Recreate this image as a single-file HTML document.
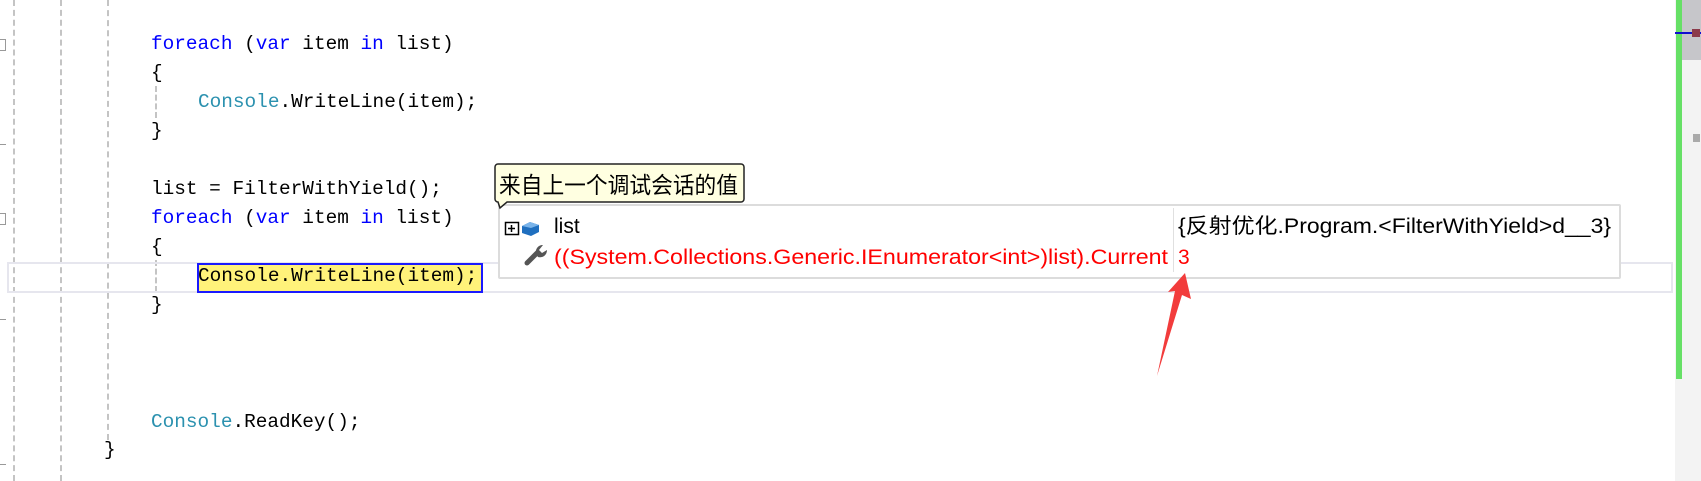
<!DOCTYPE html>
<html><head><meta charset="utf-8"><style>
html,body{margin:0;padding:0;background:#fff;width:1701px;height:481px;overflow:hidden;position:relative}
.c{position:absolute;font-family:"Liberation Mono","Noto Sans CJK SC",monospace;font-size:19.4px;line-height:29px;white-space:pre;color:#000}
.k{color:#0000ff}.t{color:#2b91af}
.g{position:absolute;width:0;border-left:2px dashed #c4c4c4}
.a{position:absolute}
</style></head><body>
<div class="g" style="left:13px;top:0;height:481px"></div>
<div class="g" style="left:60px;top:0;height:481px"></div>
<div class="g" style="left:107px;top:0;height:440px"></div>
<div class="g" style="left:155px;top:86px;height:32px"></div>
<div class="g" style="left:155px;top:260px;height:32px"></div>
<div class="a" style="left:0;top:39px;width:5px;height:10px;border:1px solid #999;border-left:none"></div>
<div class="a" style="left:0;top:213px;width:5px;height:10px;border:1px solid #999;border-left:none"></div>
<div class="a" style="left:0;top:144px;width:6px;height:1px;background:#999"></div>
<div class="a" style="left:0;top:319px;width:6px;height:1px;background:#999"></div>
<div class="a" style="left:0;top:464px;width:6px;height:1px;background:#999"></div>
<div class="a" style="left:7px;top:262px;width:1662px;height:27px;border:2px solid #e6e6ee"></div>
<div class="a" style="left:197px;top:263px;width:282px;height:26px;background:#fff27a;border:2px solid #1a1aff"></div>
<div class="c" style="left:151px;top:30px"><span class="k">foreach</span> (<span class="k">var</span> item <span class="k">in</span> list)</div>
<div class="c" style="left:151px;top:59px">{</div>
<div class="c" style="left:198px;top:88px"><span class="t">Console</span>.WriteLine(item);</div>
<div class="c" style="left:151px;top:117px">}</div>
<div class="c" style="left:151px;top:175px">list = FilterWithYield();</div>
<div class="c" style="left:151px;top:204px"><span class="k">foreach</span> (<span class="k">var</span> item <span class="k">in</span> list)</div>
<div class="c" style="left:151px;top:233px">{</div>
<div class="c" style="left:198px;top:262px">Console.WriteLine(item);</div>
<div class="c" style="left:151px;top:291px">}</div>
<div class="c" style="left:151px;top:408px"><span class="t">Console</span>.ReadKey();</div>
<div class="c" style="left:104px;top:436px">}</div>
<div class="a" style="left:498px;top:204px;width:1119px;height:71px;background:#fff;border:2px solid #dcdcdc;border-radius:2px"></div>
<div class="a" style="left:1173px;top:208px;width:1px;height:64px;background:#e0e0e0"></div>
<svg class="a" style="left:0;top:0" width="1701" height="481">
<rect x="505.5" y="222.5" width="13" height="12" fill="#fff" stroke="#000" stroke-width="1.5"/>
<path d="M508 228.5h7M511.5 225v7" stroke="#000" stroke-width="1.5"/>
<path d="M522 226 l8 -4 l9 3 v7 l-8 4 l-9 -3z" fill="#1f6fbf"/>
<path d="M522 226 l8 -4 l9 3 l-8 3z" fill="#7ab4ea"/>
<path d="M527 263 l10 -10" stroke="#555" stroke-width="5" stroke-linecap="round"/>
<path d="M536 254 a7 7 0 0 1 7 -9 l-4 5 l3 3 l5 -3 a7 7 0 0 1 -9 7z" fill="#555"/>
<text x="554" y="233" font-family="Liberation Sans,sans-serif" font-size="21" fill="#000">list</text>
<text x="554" y="264" font-family="Liberation Sans,sans-serif" font-size="21" fill="#f00" textLength="614" lengthAdjust="spacingAndGlyphs">((System.Collections.Generic.IEnumerator&lt;int&gt;)list).Current</text>
<text x="1178" y="233" font-family="Liberation Sans,'Noto Sans CJK SC',sans-serif" font-size="21" fill="#000" textLength="433" lengthAdjust="spacingAndGlyphs">{反射优化.Program.&lt;FilterWithYield&gt;d__3}</text>
<text x="1178" y="264" font-family="Liberation Sans,sans-serif" font-size="21" fill="#f00">3</text>
<path d="M498 164 h243 a3 3 0 0 1 3 3 v32 a3 3 0 0 1 -3 3 h-234 l-7 6 l-2 -6 a3 3 0 0 1 -3 -3 v-32 a3 3 0 0 1 3 -3z" fill="#ffffe1" stroke="#222" stroke-width="1.5"/>
<text x="499" y="193" font-family="'Noto Sans CJK SC',sans-serif" font-size="23" fill="#000" textLength="239" lengthAdjust="spacingAndGlyphs">来自上一个调试会话的值</text>
<polygon points="1185,273 1191,299 1182,295 1157,376 1175,291 1168,292" fill="#f23c3c"/>
</svg>
<div class="a" style="left:1675px;top:0;width:26px;height:481px;background:#f3f3f3"></div>
<div class="a" style="left:1682px;top:0;width:19px;height:60px;background:#c6c6ca"></div>
<div class="a" style="left:1676px;top:0;width:6px;height:379px;background:#66e066"></div>
<div class="a" style="left:1675px;top:32px;width:26px;height:2px;background:#1010d0"></div>
<div class="a" style="left:1692px;top:29px;width:8px;height:8px;background:#8b3a4a"></div>
<div class="a" style="left:1693px;top:134px;width:7px;height:8px;background:#aaa"></div>
</body></html>
